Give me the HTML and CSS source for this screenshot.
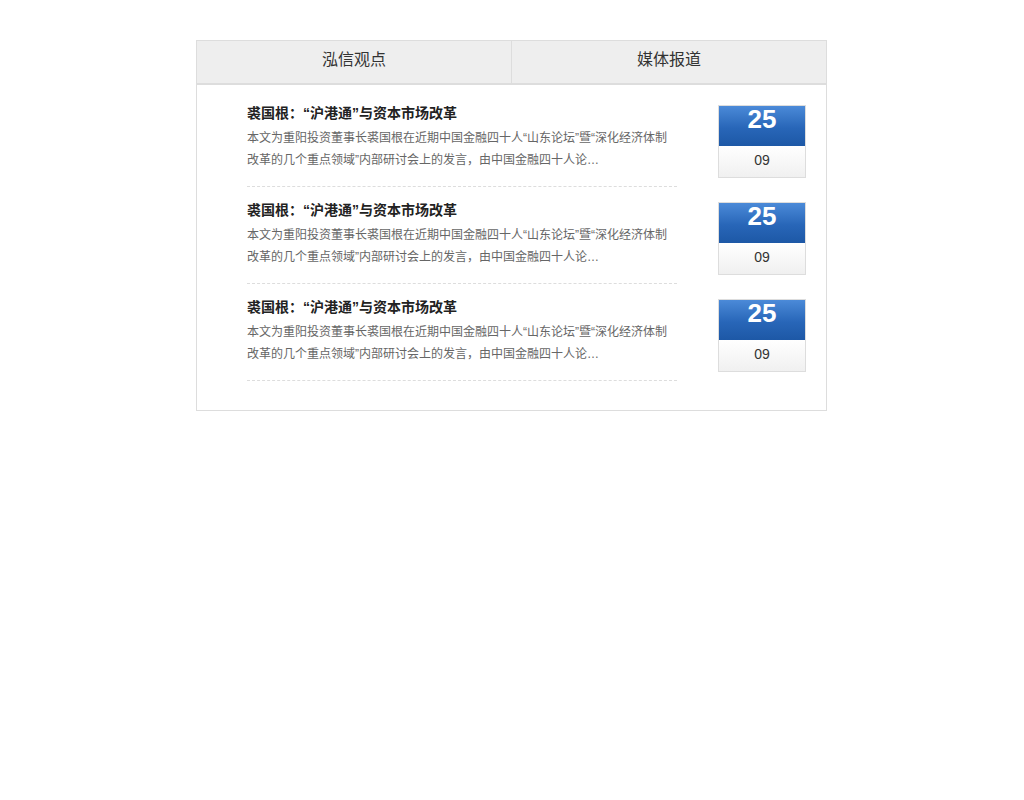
FILE: index.html
```html
<!DOCTYPE html>
<html lang="zh-CN">

<head>
    <meta charset="UTF-8">
    <title>泓信观点</title>
    <link rel="stylesheet" href="styles.css">
</head>

<body>
    <div class="box">
        <div class="tabs">
            <a href="#" class="tab">泓信观点</a>
            <a href="#" class="tab">媒体报道</a>
        </div>
        <ul class="news-list">
            <li class="news-item">
                <div class="news-main">
                    <h3 class="news-title">裘国根：“沪港通”与资本市场改革</h3>
                    <p class="news-desc">本文为重阳投资董事长裘国根在近期中国金融四十人“山东论坛”暨“深化经济体制<br>改革的几个重点领域”内部研讨会上的发言，由中国金融四十人论…</p>
                </div>
                <div class="date">
                    <div class="day">25</div>
                    <div class="month">09</div>
                </div>
            </li>
            <li class="news-item">
                <div class="news-main">
                    <h3 class="news-title">裘国根：“沪港通”与资本市场改革</h3>
                    <p class="news-desc">本文为重阳投资董事长裘国根在近期中国金融四十人“山东论坛”暨“深化经济体制<br>改革的几个重点领域”内部研讨会上的发言，由中国金融四十人论…</p>
                </div>
                <div class="date">
                    <div class="day">25</div>
                    <div class="month">09</div>
                </div>
            </li>
            <li class="news-item">
                <div class="news-main">
                    <h3 class="news-title">裘国根：“沪港通”与资本市场改革</h3>
                    <p class="news-desc">本文为重阳投资董事长裘国根在近期中国金融四十人“山东论坛”暨“深化经济体制<br>改革的几个重点领域”内部研讨会上的发言，由中国金融四十人论…</p>
                </div>
                <div class="date">
                    <div class="day">25</div>
                    <div class="month">09</div>
                </div>
            </li>
        </ul>
    </div>
</body>

</html>
```

FILE: styles.css
```css
* {
    margin: 0;
    padding: 0;
    box-sizing: border-box;
}

body {
    background: #fff;
    font-family: "Liberation Sans", "Noto Sans CJK SC", sans-serif;
    color: #333;
}

.box {
    width: 631px;
    margin: 40px 0 0 196px;
    border: 1px solid #ddd;
}

.tabs {
    display: flex;
    background: #eee;
    border-bottom: 2px solid #ddd;
}

.tab {
    flex: 1;
    height: 42px;
    line-height: 35px;
    text-align: center;
    font-size: 16px;
    color: #333;
    text-decoration: none;
    font-family: "Noto Sans CJK SC", sans-serif;
}

.tab + .tab {
    border-left: 1px solid #ddd;
}

.news-list {
    list-style: none;
    padding: 16px 20px 18px 50px;
}

.news-item {
    display: flex;
    justify-content: space-between;
    align-items: flex-start;
    margin-bottom: 11px;
}

.news-main {
    width: 430px;
    padding-bottom: 15px;
    border-bottom: 1px dashed #ddd;
}

/* latin font first so the quotes stay narrow */
.news-title {
    font-size: 14px;
    line-height: 24px;
    font-weight: bold;
    color: #222;
    font-family: "Liberation Sans", "Noto Sans CJK SC", sans-serif;
}

.news-desc {
    margin-top: 2px;
    font-size: 12px;
    line-height: 22px;
    color: #666;
    white-space: nowrap;
    font-family: "Liberation Sans", "Noto Sans CJK SC", sans-serif;
}

.date {
    width: 88px;
    margin-top: 4px;
    border: 1px solid #ddd;
    text-align: center;
}

.day {
    height: 40px;
    line-height: 27px;
    font-size: 26px;
    font-weight: bold;
    color: #fff;
    background: linear-gradient(#4b8ad8, #2866b8 55%, #1d58a6);
}

.month {
    height: 31px;
    line-height: 29px;
    font-size: 14px;
    color: #333;
    background: linear-gradient(#fff, #f0f0f0);
}
```
